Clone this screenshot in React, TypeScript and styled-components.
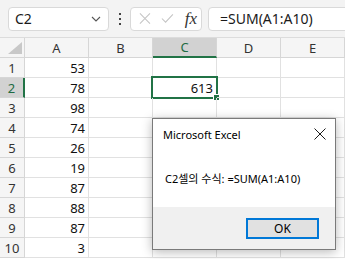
import styled, { createGlobalStyle } from "styled-components";

const GlobalStyle = createGlobalStyle`
  body {
    margin: 0;
    background: #ffffff;
    font-family: "Noto Sans", "Noto Sans CJK KR", sans-serif;
  }
`;

const columns = ["A", "B", "C", "D", "E"];
const values = [53, 78, 98, 74, 26, 19, 87, 88, 87, 3];

export default function App() {
  return (
    <>
      <GlobalStyle />
      <Page>
        <Toolbar>
          <NameBox>
            <span>C2</span>
            <svg width="10" height="6" viewBox="0 0 10 6">
              <path d="M1 1 L5 5 L9 1" fill="none" stroke="#555" strokeWidth="1.1" />
            </svg>
          </NameBox>
          <Dots>
            <i />
            <i />
            <i />
          </Dots>
          <FxBox>
            <svg width="13" height="13" viewBox="0 0 13 13">
              <path d="M1 1 L12 12 M12 1 L1 12" stroke="#c4c4c4" strokeWidth="1.1" />
            </svg>
            <svg width="14" height="11" viewBox="0 0 14 11">
              <path d="M1 5.5 L5 9.5 L13 1" fill="none" stroke="#c4c4c4" strokeWidth="1.1" />
            </svg>
            <Fx>fx</Fx>
          </FxBox>
          <FormulaBox>=SUM(A1:A10)</FormulaBox>
        </Toolbar>

        <Sheet>
          <Corner>
            <svg width="14" height="12" viewBox="0 0 14 12">
              <path d="M14 0 L14 12 L0 12 Z" fill="#c8c8c8" />
            </svg>
          </Corner>
          {columns.map((c) => (
            <ColHeader key={c} $active={c === "C"}>
              {c}
            </ColHeader>
          ))}
          {values.map((v, i) => (
            <Row key={i} index={i} value={v} />
          ))}
        </Sheet>

        <Dialog>
          <DialogTitle>
            <span>Microsoft Excel</span>
            <svg width="12" height="12" viewBox="0 0 12 12">
              <path d="M0.5 0.5 L11.5 11.5 M11.5 0.5 L0.5 11.5" stroke="#1a1a1a" strokeWidth="1" />
            </svg>
          </DialogTitle>
          <DialogBody>C2셀의 수식: =SUM(A1:A10)</DialogBody>
          <DialogFooter>
            <OkButton>OK</OkButton>
          </DialogFooter>
        </Dialog>
      </Page>
    </>
  );
}

function Row({ index, value }: { index: number; value: number }) {
  const rowNo = index + 1;
  return (
    <>
      <RowHeader $active={rowNo === 2}>{rowNo}</RowHeader>
      <Cell $align="right">{value}</Cell>
      <Cell />
      <Cell $align="right">
        {rowNo === 2 && (
          <>
            613
            <Selection />
          </>
        )}
      </Cell>
      <Cell />
      <Cell />
    </>
  );
}

const Page = styled.div`
  position: relative;
  width: 345px;
  height: 259px;
  overflow: hidden;
  background: #fff;
`;

const Toolbar = styled.div`
  display: flex;
  align-items: center;
  height: 38px;
  box-sizing: border-box;
  padding: 0 0 0 8px;
  background: #f3f3f3;
  border-bottom: 1px solid #dcdcdc;
`;

const Field = styled.div`
  display: flex;
  align-items: center;
  height: 24px;
  box-sizing: border-box;
  background: #fff;
  border: 1px solid #d9d9d9;
  border-radius: 4px;
  font-size: 14px;
  color: #1a1a1a;
`;

const NameBox = styled(Field)`
  width: 101px;
  justify-content: space-between;
  padding: 0 7px 0 6px;
`;

const Dots = styled.div`
  display: flex;
  flex-direction: column;
  gap: 3px;
  margin: 0 9px 0 10px;

  i {
    display: block;
    width: 2px;
    height: 2px;
    background: #444;
  }
`;

const FxBox = styled(Field)`
  width: 72px;
  gap: 10px;
  padding: 0 4px 0 8px;
`;

const Fx = styled.span`
  font-family: "Liberation Serif", serif;
  font-style: italic;
  font-size: 17px;
  color: #333;
  margin-left: 1px;
`;

const FormulaBox = styled(Field)`
  flex: 1;
  margin-left: 6px;
  margin-right: -6px;
  padding-left: 11px;
`;

const Sheet = styled.div`
  display: grid;
  grid-template-columns: 25px repeat(5, 64px);
  grid-auto-rows: 20px;
  font-size: 13px;
`;

const HeaderBase = styled.div`
  display: flex;
  align-items: center;
  justify-content: center;
  box-sizing: border-box;
  background: #f5f5f5;
  border-right: 1px solid #d6d6d6;
  border-bottom: 1px solid #d6d6d6;
  color: #333;
`;

const Corner = styled(HeaderBase)`
  justify-content: flex-end;
  align-items: flex-end;
  padding: 0 2px 3px 0;
`;

const ColHeader = styled(HeaderBase)<{ $active?: boolean }>`
  background: ${({ $active }) => ($active ? "#d2d2d2" : "#f5f5f5")};
  color: ${({ $active }) => ($active ? "#1e6b43" : "#333")};
  border-bottom: ${({ $active }) => ($active ? "2px solid #217346" : "1px solid #d6d6d6")};
`;

const RowHeader = styled(HeaderBase)<{ $active?: boolean }>`
  background: ${({ $active }) => ($active ? "#d2d2d2" : "#f5f5f5")};
  color: ${({ $active }) => ($active ? "#1e6b43" : "#333")};
  border-right: ${({ $active }) => ($active ? "2px solid #217346" : "1px solid #d6d6d6")};
`;

const Cell = styled.div<{ $align?: "left" | "right" }>`
  position: relative;
  display: flex;
  align-items: center;
  justify-content: ${({ $align }) => ($align === "right" ? "flex-end" : "flex-start")};
  padding: 0 3px;
  box-sizing: border-box;
  border-right: 1px solid #e1e1e1;
  border-bottom: 1px solid #e1e1e1;
  color: #111;
`;

const Selection = styled.span`
  position: absolute;
  left: -2px;
  top: -2px;
  right: -2px;
  bottom: -2px;
  border: 2px solid #217346;

  &::after {
    content: "";
    position: absolute;
    right: -4px;
    bottom: -4px;
    width: 5px;
    height: 5px;
    background: #217346;
    border: 1px solid #fff;
  }
`;

const Dialog = styled.div`
  position: absolute;
  left: 152px;
  top: 118px;
  width: 184px;
  height: 132px;
  box-sizing: border-box;
  display: flex;
  flex-direction: column;
  background: #fff;
  border: 1px solid #7a7a7a;
  box-shadow: 0 2px 10px rgba(0, 0, 0, 0.28);
  color: #000;
`;

const DialogTitle = styled.div`
  display: flex;
  align-items: center;
  justify-content: space-between;
  height: 30px;
  padding: 0 9px 0 10px;
  font-size: 11px;
`;

const DialogBody = styled.div`
  flex: 1;
  display: flex;
  align-items: center;
  padding: 0 12px 0 12px;
  font-size: 11px;
`;

const DialogFooter = styled.div`
  display: flex;
  justify-content: flex-end;
  align-items: center;
  height: 42px;
  padding-right: 16px;
  background: #f0f0f0;
`;

const OkButton = styled.button`
  width: 73px;
  height: 21px;
  box-sizing: border-box;
  background: #e1e1e1;
  border: 2px solid #0078d7;
  font-family: inherit;
  font-size: 12px;
  color: #000;
  padding: 0;
`;
